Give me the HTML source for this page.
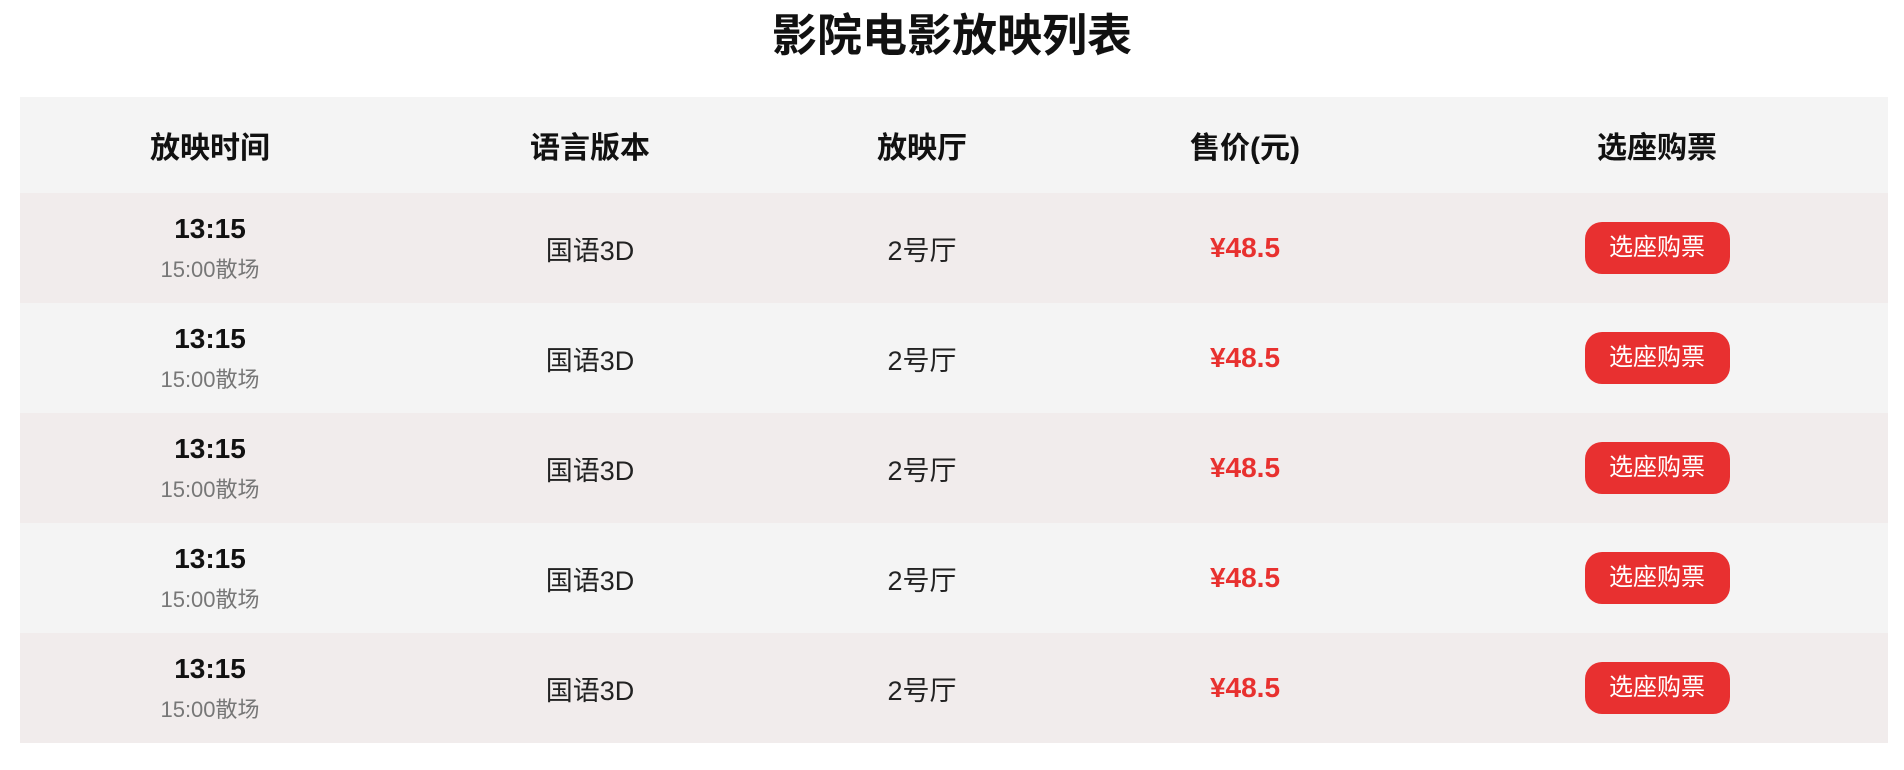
<!DOCTYPE html>
<html><head><meta charset="utf-8"><style>
body{margin:0;background:#fff;width:1904px;height:770px;font-family:"Liberation Sans","Noto Sans CJK SC",sans-serif;}
h1{margin:0;position:absolute;top:8px;left:0;width:1904px;text-align:center;font-size:45px;font-weight:bold;color:#111;line-height:56px;}
table{position:absolute;left:20px;top:97px;width:1868px;border-collapse:collapse;table-layout:fixed;}
th{height:94px;background:#f4f4f4;font-size:30px;font-weight:bold;color:#111;}
td{height:110px;text-align:center;font-size:27px;color:#222;padding:0;}
tr.o td{background:#f1ecec}
tr.e td{background:#f4f4f4}
.t{font-weight:bold;font-size:28px;color:#111;line-height:36px;padding-top:8px}
.s{font-size:22px;color:#777;line-height:46px}
.p{color:#e8312f;font-weight:bold;font-size:28px}
.b{display:inline-block;width:145px;height:52px;line-height:52px;background:#e83030;color:#fff;border-radius:17px;font-size:24px}
</style></head><body>
<h1>影院电影放映列表</h1>
<table>
<colgroup><col style="width:380px"><col style="width:380px"><col style="width:284px"><col style="width:362px"><col style="width:462px"></colgroup>
<tr><th>放映时间</th><th>语言版本</th><th>放映厅</th><th>售价(元)</th><th>选座购票</th></tr>
<tr class="o"><td><div class="t">13:15</div><div class="s">15:00散场</div></td><td>国语3D</td><td>2号厅</td><td class="p">¥48.5</td><td><span class="b">选座购票</span></td></tr>
<tr class="e"><td><div class="t">13:15</div><div class="s">15:00散场</div></td><td>国语3D</td><td>2号厅</td><td class="p">¥48.5</td><td><span class="b">选座购票</span></td></tr>
<tr class="o"><td><div class="t">13:15</div><div class="s">15:00散场</div></td><td>国语3D</td><td>2号厅</td><td class="p">¥48.5</td><td><span class="b">选座购票</span></td></tr>
<tr class="e"><td><div class="t">13:15</div><div class="s">15:00散场</div></td><td>国语3D</td><td>2号厅</td><td class="p">¥48.5</td><td><span class="b">选座购票</span></td></tr>
<tr class="o"><td><div class="t">13:15</div><div class="s">15:00散场</div></td><td>国语3D</td><td>2号厅</td><td class="p">¥48.5</td><td><span class="b">选座购票</span></td></tr>
</table>
</body></html>
